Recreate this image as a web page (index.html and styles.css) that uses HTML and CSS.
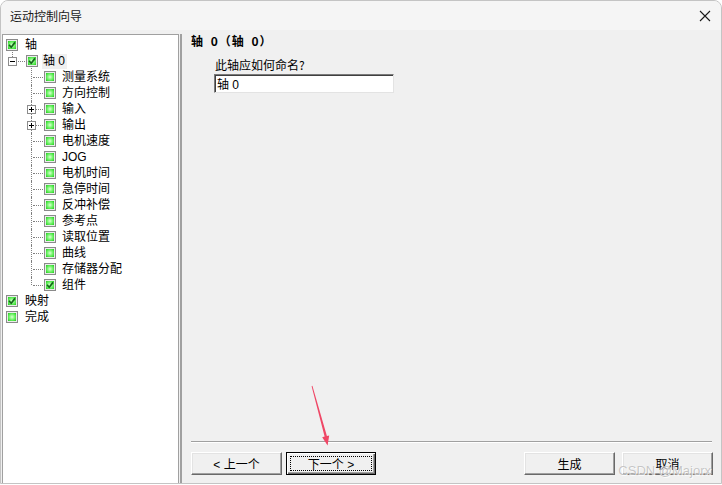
FILE: index.html
```html
<!DOCTYPE html>
<html lang="zh-CN">
<head>
    <meta charset="UTF-8">
    <title>运动控制向导</title>
    <link rel="stylesheet" href="styles.css">
</head>
<body>
    <div class="window">
        <div class="titlebar">
            <span class="title">运动控制向导</span>
            <span class="close">
                <svg width="12" height="12" viewBox="0 0 12 12"><path d="M1 1 L11 11 M11 1 L1 11" stroke="#1a1a1a" stroke-width="1.1" fill="none"/></svg>
            </span>
        </div>
        <div class="main">
            <div class="tree">
                <div class="row lv0">
                    <span class="check"><svg viewBox="0 0 8 8"><path d="M1 3.8 L3.2 6.2 L7 1.4" stroke="#15661a" stroke-width="1.7" fill="none"/></svg></span>
                    <span class="label">轴</span>
                </div>
                <div class="row lv1 last">
                    <span class="twig"><span class="expander minus"></span></span>
                    <span class="check"><svg viewBox="0 0 8 8"><path d="M1 3.8 L3.2 6.2 L7 1.4" stroke="#15661a" stroke-width="1.7" fill="none"/></svg></span>
                    <span class="label selected">轴 0</span>
                </div>
                <div class="row lv2 first"><span class="twig"></span><span class="check"></span><span class="label">测量系统</span></div>
                <div class="row lv2"><span class="twig"></span><span class="check"></span><span class="label">方向控制</span></div>
                <div class="row lv2"><span class="twig"><span class="expander plus"></span></span><span class="check"></span><span class="label">输入</span></div>
                <div class="row lv2"><span class="twig"><span class="expander plus"></span></span><span class="check"></span><span class="label">输出</span></div>
                <div class="row lv2"><span class="twig"></span><span class="check"></span><span class="label">电机速度</span></div>
                <div class="row lv2"><span class="twig"></span><span class="check"></span><span class="label">JOG</span></div>
                <div class="row lv2"><span class="twig"></span><span class="check"></span><span class="label">电机时间</span></div>
                <div class="row lv2"><span class="twig"></span><span class="check"></span><span class="label">急停时间</span></div>
                <div class="row lv2"><span class="twig"></span><span class="check"></span><span class="label">反冲补偿</span></div>
                <div class="row lv2"><span class="twig"></span><span class="check"></span><span class="label">参考点</span></div>
                <div class="row lv2"><span class="twig"></span><span class="check"></span><span class="label">读取位置</span></div>
                <div class="row lv2"><span class="twig"></span><span class="check"></span><span class="label">曲线</span></div>
                <div class="row lv2"><span class="twig"></span><span class="check"></span><span class="label">存储器分配</span></div>
                <div class="row lv2 last">
                    <span class="twig"></span>
                    <span class="check"><svg viewBox="0 0 8 8"><path d="M1 3.8 L3.2 6.2 L7 1.4" stroke="#15661a" stroke-width="1.7" fill="none"/></svg></span>
                    <span class="label">组件</span>
                </div>
                <div class="row lv0">
                    <span class="check"><svg viewBox="0 0 8 8"><path d="M1 3.8 L3.2 6.2 L7 1.4" stroke="#15661a" stroke-width="1.7" fill="none"/></svg></span>
                    <span class="label">映射</span>
                </div>
                <div class="row lv0"><span class="check"></span><span class="label">完成</span></div>
            </div>

            <div class="pane">
                <div class="heading">轴 0（轴 0）</div>
                <div class="field">
                    <div class="field-label">此轴应如何命名?</div>
                    <input class="name-input" type="text" value="轴 0">
                </div>
                <div class="spacer"></div>
                <div class="divider"></div>
                <div class="buttons">
                    <button class="btn">&lt; 上一个</button>
                    <button class="btn default"><span class="focus">下一个 &gt;</span></button>
                    <span class="grow"></span>
                    <button class="btn">生成</button>
                    <button class="btn">取消</button>
                </div>
            </div>
        </div>

        <!-- annotation drawn over the screenshot -->
        <svg class="arrow" width="30" height="70" viewBox="0 0 30 70">
            <polygon points="5.6,5.2 6.4,4.8 20.9,55.0 23.2,54.4 21.6,64.5 16.2,56.3 18.6,55.6" fill="#ef4766"/>
        </svg>
        <span class="watermark">CSDN @Majorx</span>
    </div>
</body>
</html>
```

FILE: styles.css
```css
body {
    margin: 0;
    background: #fff;
    font-family: "Liberation Sans", "Noto Sans CJK SC", sans-serif;
    font-size: 12px;
    color: #000;
}
.window {
    position: relative;
    width: 722px;
    height: 484px;
    box-sizing: border-box;
    border: 1px solid #c4c4c4;
    border-radius: 8px 8px 0 0;
    background: #f0f0f0;
    display: flex;
    flex-direction: column;
    overflow: hidden;
}
.titlebar {
    height: 29px;
    flex: none;
    display: flex;
    align-items: center;
    justify-content: space-between;
    padding: 0 9px;
    background: #f5f5f5;
}
.title {
    font-family: "Noto Sans CJK SC", sans-serif;
    font-size: 12px;
    color: #1a1a1a;
}
.close {
    width: 12px;
    height: 12px;
    margin-right: 1px;
}
.close svg {
    display: block;
}
.main {
    flex: 1;
    display: flex;
    padding-top: 4px;
    min-height: 0;
}

/* tree view */
.tree {
    width: 177px;
    margin-left: 1px;
    box-sizing: border-box;
    background: #fff;
    border: 1px solid #a0a0a0;
    border-bottom: none;
    padding-top: 2px;
}
.row {
    display: flex;
    align-items: center;
    height: 16px;
    white-space: nowrap;
}
.lv0 {
    padding-left: 3px;
}
.check {
    width: 12px;
    height: 12px;
    flex: none;
    box-sizing: border-box;
    border: 1px solid #8a8a8a;
    padding: 1px;
    background: radial-gradient(circle, #dcffd4 0%, #84f77c 40%, #3edc38 80%, #22bd22 100%) content-box, #ececec;
}
.check svg {
    display: block;
    width: 8px;
    height: 8px;
}
.label {
    margin-left: 7px;
    line-height: 16px;
}
.lv1 .label {
    margin-left: 4px;
}
.lv2 .label {
    margin-left: 6px;
}
.label.selected {
    background: #f0f0f0;
    padding: 0 2px 0 1px;
    line-height: 15px;
}
.twig {
    position: relative;
    width: 23px;
    height: 16px;
    flex: none;
}
.lv2 .twig {
    margin-left: 19px;
    width: 22px;
}
.twig::before {
    content: "";
    position: absolute;
    left: 9px;
    top: 0;
    bottom: 0;
    border-left: 1px dotted #808080;
}
.lv1 .twig::before,
.lv2.first .twig::before {
    top: -3px;
}
.last .twig::before {
    bottom: 8px;
}
.twig::after {
    content: "";
    position: absolute;
    left: 11px;
    right: 1px;
    top: 8px;
    border-top: 1px dotted #808080;
}
.expander {
    position: absolute;
    left: 5px;
    top: 4px;
    width: 9px;
    height: 9px;
    box-sizing: border-box;
    border: 1px solid #8c8c8c;
    background: #fff;
    z-index: 1;
}
.expander::before {
    content: "";
    position: absolute;
    left: 1px;
    top: 3px;
    width: 5px;
    height: 1px;
    background: #000;
}
.expander.plus::after {
    content: "";
    position: absolute;
    left: 3px;
    top: 1px;
    width: 1px;
    height: 5px;
    background: #000;
}

/* right pane */
.pane {
    flex: 1;
    margin-left: 1px;
    border-left: 2px solid #a0a0a0;
    display: flex;
    flex-direction: column;
    padding: 0 8px 8px 9px;
}
.heading {
    font-family: "Noto Sans CJK SC", sans-serif;
    font-weight: bold;
    line-height: 14px;
    letter-spacing: 1px;
    word-spacing: 3px;
}
.field {
    margin-top: 10px;
    padding-left: 23px;
}
.field-label {
    font-family: "Noto Sans CJK SC", sans-serif;
    line-height: 14px;
    padding-left: 1px;
}
.name-input {
    display: block;
    margin-top: 2px;
    width: 180px;
    height: 19px;
    box-sizing: border-box;
    border: 1px solid;
    border-color: #7a7a7a #e3e3e3 #e3e3e3 #7a7a7a;
    box-shadow: inset 1px 1px 0 #404040;
    padding: 0 2px;
    font-family: "Liberation Sans", "Noto Sans CJK SC", sans-serif;
    font-size: 12px;
    background: #fff;
    outline: none;
}
.spacer {
    flex: 1;
}
.divider {
    height: 0;
    border-top: 1px solid #a0a0a0;
    border-bottom: 1px solid #fff;
    margin-right: 1px;
}
.buttons {
    display: flex;
    margin-top: 9px;
    gap: 4px;
}
.grow {
    flex: 1;
}
.btn {
    width: 91px;
    height: 23px;
    box-sizing: border-box;
    font-family: "Liberation Sans", "Noto Sans CJK SC", sans-serif;
    font-size: 12px;
    color: #000;
    background: #f0f0f0;
    border: 1px solid;
    border-color: #fff #696969 #696969 #fff;
    box-shadow: inset -1px -1px 0 #a0a0a0, inset 1px 1px 0 #e3e3e3;
    padding: 0;
}
.btn + .btn {
    margin-left: 3px;
}
.btn.default {
    margin-left: 0;
    width: 90px;
    border: 1px solid #000;
    box-shadow: inset 1px 1px 0 #fff, inset -1px -1px 0 #696969, inset -2px -2px 0 #a0a0a0;
    padding: 3px;
}
.focus {
    display: flex;
    align-items: center;
    justify-content: center;
    height: 100%;
    border: 1px dotted #000;
    box-sizing: border-box;
}

/* overlays */
.arrow {
    position: absolute;
    left: 305px;
    top: 380px;
}
.watermark {
    position: absolute;
    right: 10px;
    bottom: 5px;
    font-family: "Liberation Sans", sans-serif;
    font-size: 13px;
    color: rgba(150, 150, 150, 0.55);
    text-shadow: 0 0 1px #fff, 1px 1px 0 rgba(255, 255, 255, 0.8);
}
```
